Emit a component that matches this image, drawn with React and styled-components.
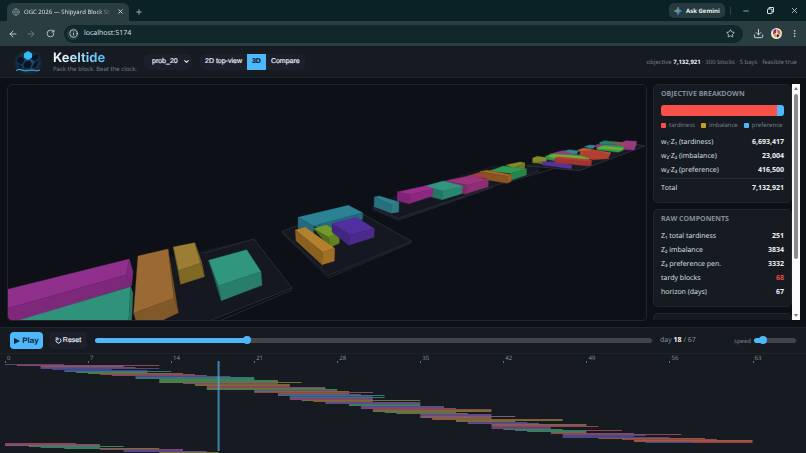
import React, { useState } from "react";
import styled, { createGlobalStyle } from "styled-components";
import {
  ArrowLeft, ArrowRight, RotateCw, Info, Star, Download, MoreVertical,
  X, Plus, Minus, Globe, ChevronDown,
} from "lucide-react";

const Global = createGlobalStyle`
  * { box-sizing: border-box; }
  body { margin: 0; background: #0d1017; color: #dde1e7; overflow: hidden;
    font: 7px/14px "Open Sans", "Noto Sans", sans-serif;
    text-rendering: geometricPrecision; }
  button, select, input { font: inherit; color: inherit; margin: 0; text-rendering: inherit; }
  button { border: 0; padding: 0; background: none; display: flex; align-items: center; justify-content: center; }
  svg { display: block; flex: none; }
`;

const Page = styled.div`
  min-height: 100vh;
  display: flex;
  flex-direction: column;
`;

/* Browser chrome */
const TabStrip = styled.div`
  display: flex;
  align-items: flex-end;
  height: 21px;
  padding: 0 0 0 7px;
  background: #0a2226;
`;
const Tab = styled.div`
  display: flex;
  align-items: center;
  gap: 4px;
  width: 122px;
  height: 18px;
  padding: 0 6px 1px 5px;
  border-radius: 6px 6px 0 0;
  background: #2a3e42;
  color: #dfe6e6;
  font-size: 6px;
`;
const TabTitle = styled.span`
  flex: 1;
  overflow: hidden;
  white-space: nowrap;
  mask-image: linear-gradient(90deg, #000 82%, transparent);
`;
const IconButton = styled.button`
  width: ${(p) => p.$w || 18}px;
  height: 18px;
  color: ${(p) => (p.$dim ? "#71858a" : "#d8e2e3")};
`;
const Spacer = styled.div`
  flex: 1;
`;
const WindowTools = styled.div`
  display: flex;
  align-items: center;
  height: 21px;
`;
const Gemini = styled.button`
  gap: 4px;
  width: 56px;
  height: 15px;
  margin-right: 5px;
  border-radius: 5px;
  background: #263b40;
  color: #eef3f3;
  font-size: 6px;
  font-weight: 700;
`;
const Divider = styled.i`
  width: 1px;
  height: 8px;
  margin-right: 3px;
  background: #2b454a;
`;
const Toolbar = styled.div`
  display: flex;
  align-items: center;
  height: 25px;
  padding: 0 3px 0 4px;
  background: #2a3e42;
`;
const Address = styled.label`
  flex: 1;
  display: flex;
  align-items: center;
  gap: 5px;
  height: 18px;
  margin: 0 6px 0 4px;
  padding: 0 8px 0 3px;
  border-radius: 9px;
  background: #10272c;
  color: #d8e2e3;
`;
const SiteInfo = styled.span`
  display: grid;
  place-items: center;
  width: 12px;
  height: 12px;
  border-radius: 50%;
  background: #263b40;
`;
const AddressInput = styled.input`
  flex: 1;
  min-width: 0;
  border: 0;
  padding: 0;
  outline: 0;
  background: none;
  color: #dfe6e6;
`;

/* App header */
const Header = styled.header`
  display: flex;
  align-items: center;
  height: 32px;
  padding: 0 9px 0 13px;
  border-bottom: 1px solid #20262e;
  background: #161b22;
`;
const Brand = styled.div`
  display: flex;
  flex-direction: column;
  width: 91px;
  margin-left: 10px;
`;
const Name = styled.h1`
  align-self: flex-start;
  margin: 0;
  font: 700 13px/14px Inter, "Open Sans", sans-serif;
  background: linear-gradient(90deg, #f2f8fd 10%, #58bdf2 90%);
  background-clip: text;
  color: transparent;
`;
const Tagline = styled.span`
  color: #7a838e;
  font: 6px/8px "Open Sans", sans-serif;
  white-space: nowrap;
`;
const SelectBox = styled.label`
  display: grid;
  align-items: center;
  width: 48px;
  height: 16px;
  margin-right: 8px;
  border-radius: 5px;
  background: #1c202c;
  font-family: "Liberation Sans", Arial, sans-serif;
  -webkit-text-stroke: 0.2px;
  > * { grid-area: 1 / 1; }
  > svg { justify-self: end; margin-right: 2px; pointer-events: none; }
`;
const Select = styled.select`
  appearance: none;
  width: 100%;
  height: 100%;
  padding: 0 8px 0 8px;
  border: 0;
  background: none;
  color: #e5e9ef;
`;
const Segments = styled.div`
  display: flex;
  height: 16px;
  overflow: hidden;
  border-radius: 5px;
  background: #1c202c;
`;
const Segment = styled.button`
  padding: 0 5px;
  background: ${(p) => (p.$on ? "#4fb8fa" : "transparent")};
  color: ${(p) => (p.$on ? "#08233a" : "#e5e9ef")};
  font: ${(p) => (p.$on ? 700 : 400)} 7px/14px "Liberation Sans", Arial, sans-serif;
  -webkit-text-stroke: 0.2px;
`;
const Summary = styled.span`
  color: #7d8590;
  font-size: 6px;
  white-space: nowrap;
  b { color: #f1f4f8; }
`;

/* Work area */
const Main = styled.main`
  flex: 1;
  display: grid;
  grid-template-columns: 1fr 147px;
  gap: 6px;
  min-height: 0;
  padding: 6px 6px 6px 7px;
`;
const Viewport = styled.section`
  min-width: 0;
  overflow: hidden;
  border: 1px solid #20252e;
  border-radius: 5px;
  background: #0d1017;
  svg { width: 100%; height: 100%; }
`;
const Sidebar = styled.aside`
  display: flex;
  height: 236px;
`;
const Cards = styled.div`
  flex: 1;
  display: flex;
  flex-direction: column;
  gap: 6px;
  overflow: hidden;
`;
const Card = styled.section`
  flex: none;
  padding: 6px 7px;
  border: 1px solid #20262e;
  border-radius: 5px;
  background: #161b22;
`;
const CardTitle = styled.h2`
  margin: 0 0 6px;
  color: #848e9b;
  font: 700 7px/8px "Open Sans", "Noto Sans", sans-serif;
  text-transform: uppercase;
`;
const StackBar = styled.div`
  display: flex;
  height: 11px;
  overflow: hidden;
  border-radius: 3px;
`;
const Share = styled.i`
  flex: ${(p) => p.$n} 0 0;
  background: ${(p) => p.$c};
`;
const Legend = styled.div`
  display: flex;
  gap: 6px;
  margin: 5px 0 6px;
  color: #7d8590;
  font-size: 6px;
  line-height: 9px;
  span { display: flex; align-items: center; gap: 3px; }
`;
const Swatch = styled.i`
  width: 5px;
  height: 5px;
  border-radius: 1px;
  background: ${(p) => p.$c};
`;
const Table = styled.table`
  width: 100%;
  border-collapse: separate;
  border-spacing: 0;
`;
const Row = styled.tr`
  th, td {
    height: ${(p) => (p.$total ? 18 : 14)}px;
    padding: ${(p) => (p.$total ? "3px 0 0" : "0")};
    border-top: ${(p) => (p.$total ? "1px solid #262c35" : "0")};
    line-height: 14px;
    white-space: nowrap;
  }
  th { font-weight: 400; text-align: left; }
  td { color: ${(p) => (p.$alert ? "#ef4444" : "#eceff4")}; font-weight: 700; text-align: right; }
`;
const Scrollbar = styled.div`
  display: flex;
  flex-direction: column;
  align-items: center;
  justify-content: space-between;
  width: 8px;
  padding: 3px 0;
  background: #fafafa;
`;
const Thumb = styled.i`
  width: 4px;
  height: 165px;
  margin: 4px 0 auto;
  border-radius: 2px;
  background: #8b8b8b;
`;

/* Playback */
const Playback = styled.section`
  display: flex;
  align-items: center;
  height: 27px;
  padding: 0 10px;
  border-top: 1px solid #20262e;
  border-bottom: 1px solid #1d232b;
  background: #161b22;
`;
const Action = styled.button`
  gap: ${(p) => (p.$primary ? 2 : 1)}px;
  width: ${(p) => (p.$primary ? 33 : 38)}px;
  height: 17px;
  margin-right: ${(p) => (p.$primary ? 6 : 8)}px;
  border-radius: 4px;
  background: ${(p) => (p.$primary ? "#4fb8fa" : "#1c202c")};
  color: ${(p) => (p.$primary ? "#08233a" : "#e5e9ef")};
  font: ${(p) => (p.$primary ? "700 8px" : "400 7px")}/14px "Liberation Sans", Arial, sans-serif;
  -webkit-text-stroke: ${(p) => (p.$primary ? "0" : "0.2px")};
`;
const Range = styled.input`
  appearance: none;
  flex: ${(p) => (p.$w ? "none" : 1)};
  width: ${(p) => p.$w || 100}px;
  min-width: 0;
  height: 8px;
  background: none;
  &::-webkit-slider-runnable-track {
    height: 5px;
    border-radius: 3px;
    background: linear-gradient(90deg, #4fb8fa var(--fill), #434447 var(--fill));
  }
  &::-webkit-slider-thumb {
    appearance: none;
    width: 8px;
    height: 8px;
    margin-top: -2px;
    border-radius: 50%;
    background: #4fb8fa;
  }
`;
const Day = styled.output`
  width: 82px;
  padding-left: 8px;
  color: #8a93a0;
  white-space: nowrap;
  b { color: #f1f4f8; }
`;
const Speed = styled.label`
  display: flex;
  align-items: center;
  gap: 3px;
  color: #7d8590;
  font-size: 6px;
`;

/* Schedule */
const Schedule = styled.section`
  height: 99px;
  padding: 0 6px 0 5px;
  background: #161b22;
`;
const Axis = styled.div`
  display: grid;
  grid-template-columns: repeat(9, 7fr) 4fr;
  height: 10px;
  color: #8b929b;
  font-size: 6px;
  line-height: 8px;
`;
const Tick = styled.span`
  display: flex;
  align-items: flex-start;
  gap: 1px;
  &::before { content: ""; width: 1px; height: 2px; margin-top: 7px; background: #68707a; }
`;
const Chart = styled.svg`
  width: 100%;
  height: 89px;
  overflow: visible;
`;

/* Each scene group: origin and its faces, in drawing units. */
const scene = [
  [0, 690, [
    ["#151820", "510,82 762,27 876,174 630,272 400,275 500,180"],
    ["#91308c", "22,178 388,87 378,135 22,235"],
    ["#7d287a", "388,87 399,125 395,168 378,135"],
    ["#7d287a", "22,235 378,135 395,168 60,272 22,272"],
    ["#30927a", "60,270 392,170 386,272 60,272"],
    ["#287865", "392,170 399,190 395,272 386,272"],
    ["#9b6a34", "414,78 504,57 522,205 401,250"],
    ["#76501f", "504,57 535,248 522,205"],
    ["#815829", "401,250 522,205 535,248 485,272 408,272"],
    ["#9b7e34", "520,51 584,38 605,98 535,122"],
    ["#806923", "535,122 605,98 613,140 542,163"],
    ["#715b1c", "520,51 535,122 542,163"],
    ["#6f5a1c", "584,38 613,140 605,98"],
    ["#30967e", "626,91 740,59 783,125 655,168"],
    ["#287e6b", "655,168 783,125 786,166 664,212"],
    ["#216956", "626,91 655,168 664,212"],
  ]],
  [810, 540, [
    ["#151820", "36,154 235,78 425,184 176,286"],
    ["#2c8194", "84,112 235,76 278,98 131,138"],
    ["#236a7b", "84,112 131,138 131,162 84,145"],
    ["#236a7b", "131,138 278,98 278,118 160,150"],
    ["#74992a", "131,146 168,135 208,156 175,172"],
    ["#618223", "175,172 208,156 208,190 180,202"],
    ["#526e1c", "131,146 175,172 180,202"],
    ["#50309e", "186,130 258,111 313,146 240,165"],
    ["#42277f", "186,130 240,165 236,196 186,156"],
    ["#4a2b8c", "240,165 313,146 312,172 236,196"],
    ["#b3802f", "76,150 106,142 194,205 158,217"],
    ["#8b611f", "76,150 158,217 156,254 78,182"],
    ["#a07025", "158,217 194,205 193,243 156,254"],
  ]],
  [1080, 390, [
    ["#151820", "38,234 110,195 400,106 535,102 538,122 115,268"],
    ["#31828f", "43,201 58,198 117,216 95,224"],
    ["#26717d", "43,201 95,224 94,250 42,230"],
    ["#2d7c87", "95,224 117,216 116,246 94,250"],
    ["#868b2b", "438,105 480,96 495,99 463,113"],
    ["#73781e", "463,112 495,99 494,116"],
    ["#2d9a55", "388,123 430,108 500,117 452,130"],
    ["#258649", "452,130 500,117 499,135 454,150"],
    ["#a23c47", "325,138 362,126 385,134 385,146"],
    ["#aa6827", "360,125 380,121 455,134 444,139"],
    ["#895322", "360,126 444,139 442,160 382,150"],
    ["#9a5d24", "444,139 455,134 454,154 442,160"],
    ["#9b347d", "255,153 330,137 385,149 323,166"],
    ["#832967", "255,153 323,166 316,192 262,180"],
    ["#902e74", "323,166 385,149 385,170 316,192"],
    ["#309680", "192,169 250,153 308,168 250,184"],
    ["#237564", "192,169 250,184 246,209 212,200"],
    ["#2a8571", "250,184 308,168 305,191 246,209"],
    ["#992f8c", "112,186 198,167 220,176 150,194"],
    ["#812477", "112,186 150,194 146,221 112,212"],
    ["#8d2881", "150,194 220,176 218,198 146,221"],
  ]],
  [1500, 375, [
    ["#171a22", "75,127 100,112 395,55 434,63 238,138 158,130"],
    ["#858b2c", "98,99 112,94 141,98 137,115 98,113"],
    ["#6e7822", "98,111 137,108 135,118"],
    ["#953a87", "150,87 186,77 230,85 205,98"],
    ["#338694", "190,78 210,74 235,78 230,88"],
    ["#358f4c", "136,94 152,87 255,90 270,98 265,108 165,107 138,103"],
    ["#73ae32", "145,93 160,88 270,96 270,102 160,98"],
    ["#57309a", "127,110 175,110 216,121 213,131 127,120"],
    ["#b96331", "232,76 251,69 333,83 325,94 255,86"],
    ["#b13f32", "240,79 280,75 330,87 325,101 278,104 240,90"],
    ["#b73d35", "165,98 178,95 277,105 264,109 165,103"],
    ["#a03530", "165,101 264,109 275,105 274,121 264,123 165,113"],
    ["#328291", "253,65 268,60 285,61 282,69 270,71"],
    ["#913483", "281,65 292,58 390,60 404,62 402,75 350,73"],
    ["#339b51", "289,70 311,60 371,64 370,76 355,82 292,74"],
    ["#72ae35", "290,69 310,64 371,70 362,75"],
    ["#27826d", "298,53 312,47 365,52 361,60 300,58"],
    ["#963a84", "363,53 378,47 410,49 409,58 402,75 368,62"],
    ["#ad493c", "330,55 365,54 390,60 370,60"],
  ]],
];
const edges = [
  [0, 690, "610,70 762,27 876,174 630,272"],
  [0, 690, "876,180 660,272"],
  [810, 540, "76,138 36,154 176,286 425,184 278,102"],
  [810, 540, "36,158 176,293 425,188"],
  [1080, 390, "43,225 38,234 115,265 538,122"],
  [1080, 390, "38,238 115,270 400,172"],
  [1500, 375, "20,172 158,132"],
  [1500, 375, "80,122 238,137 434,63 408,58"],
];

function Scene() {
  return (
    <svg viewBox="24 255 1914 705" preserveAspectRatio="xMidYMid slice" role="img" aria-label="3D bays">
      {scene.map(([x, y, faces], g) => (
        <g key={g} transform={`translate(${x} ${y})`}>
          {faces.map(([c, pts], i) => (
            <React.Fragment key={i}>
              <polygon points={pts} fill={c} stroke={c} strokeWidth="1" />
              {i === 0 && edges.filter((e) => e[0] === x).map((e) => (
                <polyline key={e[2]} points={e[2]} fill="none" stroke="#4a5160" strokeOpacity="0.6" strokeWidth="2" />
              ))}
            </React.Fragment>
          ))}
        </g>
      ))}
    </svg>
  );
}

const P = "#5b4284", R = "#934450", M = "#7d496f", B = "#3d4b91", T = "#34767a",
  G = "#3f824e", O = "#706f3c", A = "#8c5a3a", Y = "#7c5c6d", V = "#654984";
/* start day, end day, vertical position, colour */
const bars = [
  [0, 5, 0, P], [1, 13, 1, R], [3, 10, 2, Y], [3, 11, 3, V], [3, 13, 4, P], [4, 9, 5, B],
  [5, 12, 6, B], [5, 14, 7, T], [6, 12, 8, G], [7, 15, 9, O], [8, 16, 10, R], [9, 17, 11, M],
  [11, 19, 12, P], [11, 21, 13, T], [11, 21, 14, T], [13, 21, 15, G], [13, 23, 16, G],
  [13, 23, 17, G], [13, 25, 18, O], [15, 23, 19, M], [16, 24, 20, A], [16, 24, 21, O],
  [17, 24, 22, R], [17, 27, 23, M], [17, 27, 24, O], [17, 28, 25, G], [21, 28, 26, V],
  [21, 29, 27, O], [21, 31, 28, R], [23, 29, 29, A], [23, 30, 30, V], [23, 32, 31, T],
  [24, 31, 32, B], [24, 32, 33, T], [24, 31, 34, V], [24, 31, 35, R], [25, 35, 36, O],
  [26, 31, 37, A], [27, 35, 38, V], [27, 35, 39, V], [29, 35, 40, T], [29, 35, 41, G],
  [30, 37, 42, V], [30, 37, 43, V], [30, 38, 44, M], [31, 41, 45, R], [31, 41, 46, O],
  [31, 41, 47, O], [32, 38, 48, G], [33, 39, 49, A], [35, 41, 50, V], [35, 41, 51, V],
  [35, 43, 52, Y], [35, 41, 53, Y], [36, 41, 54, A], [36, 47, 55, A], [38, 47, 56, O],
  [38, 43, 57, O], [39, 44, 58, P], [39, 45, 59, V], [41, 49, 60, Y], [41, 49, 61, A],
  [41, 50, 62, R], [41, 46, 63, P], [41, 46, 64, V], [42, 47, 65, G], [43, 52, 66, R],
  [43, 49, 66, T], [44, 49, 67, G], [46, 49, 68, O], [46, 53, 69, M], [47, 57, 70, R],
  [47, 54, 71, B], [47, 53, 72, B], [47, 56, 73, P], [50, 59, 74, A], [52, 60, 75, R],
  [53, 63, 76, "#b0504a"], [53, 63, 77, A], [54, 62, 78, B], [58, 63, 78, R],
  [0, 6, 79, R], [0, 8, 80, M], [0, 8, 81, Y], [2, 10, 82, G], [3, 8, 83, T], [5, 12, 84, G],
  [8, 13, 84, O], [8, 15, 85, M], [10, 15, 86, P], [10, 17, 87, V], [13, 18, 88, O],
];

function Logo() {
  return (
    <svg width="30" height="26" viewBox="0 0 60 52" aria-label="Keeltide logo">
      <defs>
        <radialGradient id="glow">
          <stop offset="0.3" stopColor="#2e9bd8" stopOpacity="0.4" />
          <stop offset="1" stopColor="#2e9bd8" stopOpacity="0" />
        </radialGradient>
      </defs>
      <ellipse cx="30" cy="27" rx="30" ry="25" fill="url(#glow)" />
      <path d="M8 18 18 14 24 22 18 32 7 26ZM25 24 34 23 38 30 34 39 23 39 20 32ZM40 12 52 9 50 20 43 25 36 19ZM42 28 50 22 52 24 46 38 37 38ZM8 28 17 34 20 40 13 40Z" fill="#091525" stroke="#173f5e" strokeWidth="1" />
      <path d="M30 4 38 9V17L30 22 22 17V9Z" fill="#35bafa" />
      <path d="M6 43Q12 39 18 42T31 43T43 43T54 42" fill="none" stroke="#42b9ef" strokeWidth="2" />
    </svg>
  );
}

const objective = [
  ["w₁·Z₁ (tardiness)", "6,693,417"],
  ["w₂·Z₂ (imbalance)", "23,004"],
  ["w₃·Z₃ (preference)", "416,500"],
  ["Total", "7,132,921"],
];
const raw = [
  ["Z₁ total tardiness", "251"],
  ["Z₂ imbalance", "3834"],
  ["Z₃ preference pen.", "3332"],
  ["tardy blocks", "68"],
  ["horizon (days)", "67"],
];
const terms = [
  ["tardiness", 6693417, "#f85149"],
  ["imbalance", 23004, "#c99a2e"],
  ["preference", 416500, "#4fb8fa"],
];
/* Terms below one percent are too thin for a segment of their own. */
const shares = terms.filter(([, n]) => n > 71329);

export default function App() {
  const [day, setDay] = useState(18);
  const [speed, setSpeed] = useState(15);
  const [view, setView] = useState("3D");
  return (
    <Page>
      <Global />
      <TabStrip>
        <Tab>
          <Globe size={8} color="#81979c" />
          <TabTitle>OGC 2026 — Shipyard Block St</TabTitle>
          <IconButton $w={6} aria-label="Close tab"><X size={7} strokeWidth={3} /></IconButton>
        </Tab>
        <IconButton $w={20} aria-label="New tab"><Plus size={8} /></IconButton>
        <Spacer />
        <WindowTools>
          <Gemini>
            <svg width="8" height="8" viewBox="0 0 16 16">
              <defs>
                <linearGradient id="gem" x1="0" y1="0" x2="1" y2="1">
                  <stop stopColor="#f4b63d" /><stop offset="0.4" stopColor="#63a46c" />
                  <stop offset="0.6" stopColor="#4285f4" /><stop offset="1" stopColor="#e4566b" />
                </linearGradient>
              </defs>
              <path d="M8 0Q9 7 16 8Q9 9 8 16Q7 9 0 8Q7 7 8 0Z" fill="url(#gem)" stroke="url(#gem)" />
            </svg>
            Ask Gemini
          </Gemini>
          <Divider />
          <IconButton $w={24} aria-label="Minimize"><Minus size={8} /></IconButton>
          <IconButton $w={24} aria-label="Restore">
            <svg width="7" height="7" viewBox="0 0 14 14" fill="none" stroke="currentColor" strokeWidth="2">
              <rect x="1" y="4" width="9" height="9" rx="1" /><path d="M4 4V1H13V10H10" />
            </svg>
          </IconButton>
          <IconButton $w={24} aria-label="Close window"><X size={9} /></IconButton>
        </WindowTools>
      </TabStrip>
      <Toolbar>
        <IconButton aria-label="Back"><ArrowLeft size={10} /></IconButton>
        <IconButton $dim aria-label="Forward"><ArrowRight size={10} /></IconButton>
        <IconButton $w={20} aria-label="Reload"><RotateCw size={9} /></IconButton>
        <Address>
          <SiteInfo><Info size={9} /></SiteInfo>
          <AddressInput aria-label="Address" defaultValue="localhost:5174" />
          <Star size={9} />
        </Address>
        <IconButton $w={18} aria-label="Downloads"><Download size={11} /></IconButton>
        <IconButton aria-label="Profile">
          <svg width="11" height="11" viewBox="0 0 22 22">
            <circle cx="11" cy="11" r="11" fill="#f1e7d9" />
            <path d="M5 4 11 2 10 10 4 13Z" fill="#7a2d8c" />
            <path d="M12 3 18 6 19 14 13 10Z" fill="#d95b2b" />
            <path d="M4 13 10 11 12 17 8 19Z" fill="#e5a32e" />
            <path d="M13 12 17 14 14 19 11 17Z" fill="#34203a" />
          </svg>
        </IconButton>
        <IconButton aria-label="Menu"><MoreVertical size={9} /></IconButton>
      </Toolbar>
      <Header>
        <Logo />
        <Brand>
          <Name>Keeltide</Name>
          <Tagline>Pack the block. Beat the clock.</Tagline>
        </Brand>
        <SelectBox>
          <Select aria-label="Problem"><option>prob_20</option></Select>
          <ChevronDown size={7} strokeWidth={4} />
        </SelectBox>
        <Segments>
          {["2D top-view", "3D", "Compare"].map((v) => (
            <Segment key={v} $on={v === view} onClick={() => setView(v)}>{v}</Segment>
          ))}
        </Segments>
        <Spacer />
        <Summary>objective <b>7,132,921</b> · 300 blocks · 5 bays · feasible true</Summary>
      </Header>
      <Main>
        <Viewport><Scene /></Viewport>
        <Sidebar>
          <Cards>
            <Card>
              <CardTitle>Objective breakdown</CardTitle>
              <StackBar>{shares.map(([k, n, c]) => <Share key={k} $n={n} $c={c} />)}</StackBar>
              <Legend>{terms.map(([k, , c]) => <span key={k}><Swatch $c={c} />{k}</span>)}</Legend>
              <Table><tbody>
                {objective.map(([k, v]) => <Row key={k} $total={k === "Total"}><th scope="row">{k}</th><td>{v}</td></Row>)}
              </tbody></Table>
            </Card>
            <Card>
              <CardTitle>Raw components</CardTitle>
              <Table><tbody>
                {raw.map(([k, v]) => <Row key={k} $alert={k === "tardy blocks"}><th scope="row">{k}</th><td>{v}</td></Row>)}
              </tbody></Table>
            </Card>
            <Card><CardTitle>How to read</CardTitle></Card>
          </Cards>
          <Scrollbar>
            <svg width="4" height="3" viewBox="0 0 4 3"><path d="M0 3 2 0 4 3Z" fill="#777" /></svg>
            <Thumb />
            <svg width="4" height="3" viewBox="0 0 4 3"><path d="M0 0 2 3 4 0Z" fill="#777" /></svg>
          </Scrollbar>
        </Sidebar>
      </Main>
      <Playback>
        <Action $primary>
          <svg width="6" height="6" viewBox="0 0 6 6"><path d="M0 0 6 3 0 6Z" fill="currentColor" /></svg>Play
        </Action>
        <Action onClick={() => setDay(0)}>
          <svg width="7" height="7" viewBox="0 0 14 14" fill="none" stroke="currentColor" strokeWidth="2">
            <path d="M4 3A5 5 0 1 0 10 3M1 2H6V7" />
          </svg>Reset
        </Action>
        <Range type="range" aria-label="Day" min="0" max="67" value={day}
          onChange={(e) => setDay(+e.target.value)} style={{ "--fill": `${(day / 67) * 100}%` }} />
        <Day>day <b>{day}</b> / 67</Day>
        <Speed>speed
          <Range $w={42} type="range" min="0" max="100" value={speed}
            onChange={(e) => setSpeed(+e.target.value)} style={{ "--fill": `${speed}%` }} />
        </Speed>
      </Playback>
      <Schedule>
        <Axis>{[0, 7, 14, 21, 28, 35, 42, 49, 56, 63].map((d) => <Tick key={d}>{d}</Tick>)}</Axis>
        <Chart viewBox="0 0 67 89" preserveAspectRatio="none" role="img" aria-label="Block schedule">
          {bars.map(([a, b, y, c], i) => <rect key={i} x={a} y={y} width={b - a} height="1" fill={c} />)}
          <path d={`M${day} -3V87`} stroke="#4aa8d8" strokeOpacity="0.75" strokeWidth="2" vectorEffect="non-scaling-stroke" />
        </Chart>
      </Schedule>
    </Page>
  );
}
